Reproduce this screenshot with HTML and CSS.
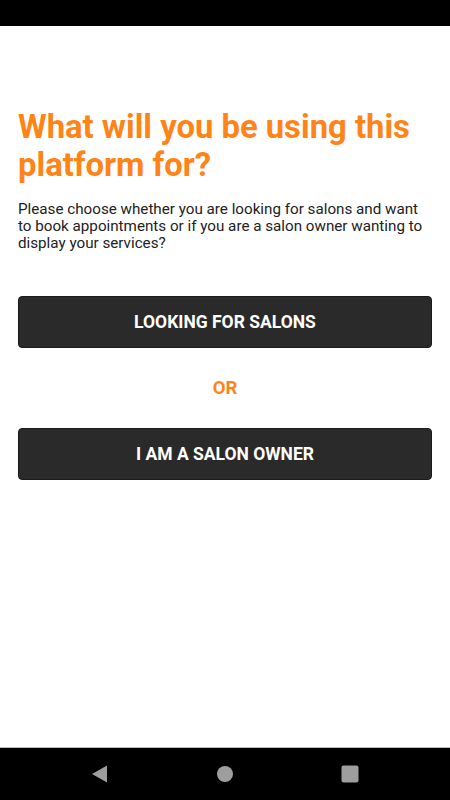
FILE: index.html
```html
<!DOCTYPE html>
<html lang="en">
<head>
    <meta charset="UTF-8">
    <meta name="viewport" content="width=device-width, initial-scale=1.0">
    <title>Choose account type</title>
    <link rel="stylesheet" href="styles.css">
</head>
<body>

<div class="status-bar"></div>

<main class="screen">
    <h1 class="title">What will you be using this platform for?</h1>
    <p class="intro">Please choose whether you are looking for salons and want to book appointments or if you are a salon owner wanting to display your services?</p>

    <div class="choices">
        <button type="button" class="choice">LOOKING FOR SALONS</button>
        <div class="or">OR</div>
        <button type="button" class="choice">I AM A SALON OWNER</button>
    </div>
</main>

<nav class="nav-bar">
    <svg width="18" height="18" viewBox="0 0 18 18"><polygon points="16,0.5 16,17.5 1,9" fill="#9e9e9e"/></svg>
    <svg width="18" height="18" viewBox="0 0 18 18"><circle cx="9" cy="9" r="8" fill="#9e9e9e"/></svg>
    <svg width="18" height="18" viewBox="0 0 18 18"><rect x="0.5" y="0.5" width="17" height="17" rx="2" fill="#9e9e9e"/></svg>
</nav>

</body>
</html>
```

FILE: styles.css
```css
html, body {
    height: 100%;
}
body {
    margin: 0;
    font-family: Roboto, "Noto Sans", Arial, sans-serif;
    background-color: #fff;
    display: flex;
    flex-direction: column;
}
.status-bar {
    height: 26px;
    background-color: #000;
    flex-shrink: 0;
}
.screen {
    flex: 1;
    padding: 82px 18px 0 18px;
}
.title {
    margin: 0;
    color: #ff8418;
    font-size: 32.8px;
    line-height: 38px;
    font-weight: 700;
}
.intro {
    margin: 17px 0 0 0;
    color: #222;
    font-size: 15.2px;
    line-height: 17px;
}
.choices {
    margin-top: 44px;
    display: flex;
    flex-direction: column;
}
.choice {
    height: 52px;
    background-color: #2a2a2a;
    color: #fff;
    border: 1px solid #1a1a1a;
    border-radius: 4px;
    font-family: inherit;
    font-size: 17.5px;
    font-weight: 700;
    cursor: pointer;
}
.or {
    height: 80px;
    line-height: 80px;
    text-align: center;
    color: #ff8418;
    font-size: 18.5px;
    font-weight: 700;
}
.nav-bar {
    height: 52px;
    flex-shrink: 0;
    background-color: #000;
    border-top: 1px solid #bbb;
    display: flex;
    justify-content: center;
    align-items: center;
    gap: 107px;
}
```
